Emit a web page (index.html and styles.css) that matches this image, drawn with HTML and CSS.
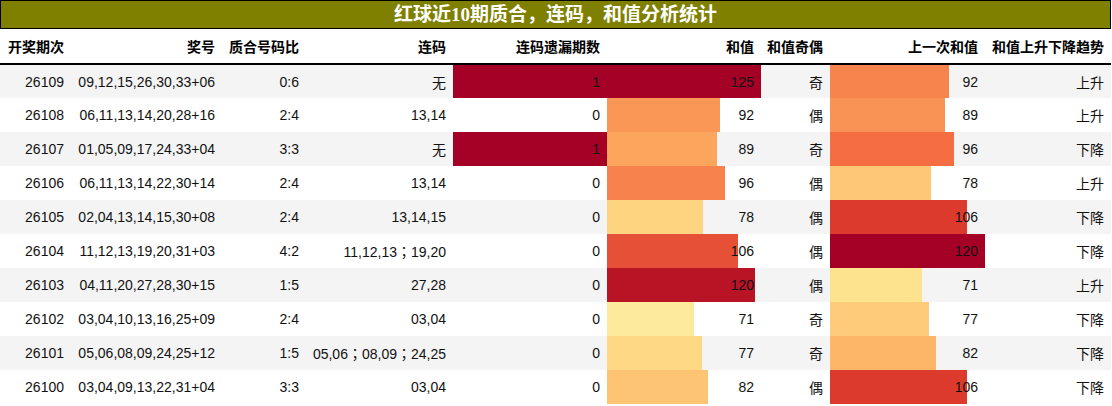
FILE: index.html
```html
<!DOCTYPE html>
<html lang="zh">
<head>
<meta charset="utf-8">
<title>红球近10期质合，连码，和值分析统计</title>
<link rel="stylesheet" href="styles.css">
</head>
<body>
<div class="sheet">
  <div class="title">红球近10期质合，连码，和值分析统计</div>
  <table class="stats">
    <colgroup>
      <col class="c1"><col class="c2"><col class="c3"><col class="c4"><col class="c5"><col class="c6"><col class="c7"><col class="c8"><col class="c9">
    </colgroup>
    <thead>
      <tr>
        <th>开奖期次</th><th>奖号</th><th>质合号码比</th><th>连码</th><th>连码遗漏期数</th><th>和值</th><th>和值奇偶</th><th>上一次和值</th><th>和值上升下降趋势</th>
      </tr>
    </thead>
    <tbody>
      <tr>
        <td>26109</td><td>09,12,15,26,30,33+06</td><td>0:6</td><td class="cjk">无</td>
        <td class="bar" style="--w:100%;--c:#a50026">1</td>
        <td class="bar" style="--w:100%;--c:#a50026">125</td>
        <td class="cjk">奇</td>
        <td class="bar" style="--w:76.67%;--c:#f7834d">92</td>
        <td class="cjk">上升</td>
      </tr>
      <tr>
        <td>26108</td><td>06,11,13,14,20,28+16</td><td>2:4</td><td class="runs">13,14</td>
        <td class="bar">0</td>
        <td class="bar" style="--w:73.6%;--c:#fa9756">92</td>
        <td class="cjk">偶</td>
        <td class="bar" style="--w:74.17%;--c:#f99355">89</td>
        <td class="cjk">上升</td>
      </tr>
      <tr>
        <td>26107</td><td>01,05,09,17,24,33+04</td><td>3:3</td><td class="cjk">无</td>
        <td class="bar" style="--w:100%;--c:#a50026">1</td>
        <td class="bar" style="--w:71.2%;--c:#fca65d">89</td>
        <td class="cjk">奇</td>
        <td class="bar" style="--w:80%;--c:#f46d43">96</td>
        <td class="cjk">下降</td>
      </tr>
      <tr>
        <td>26106</td><td>06,11,13,14,22,30+14</td><td>2:4</td><td class="runs">13,14</td>
        <td class="bar">0</td>
        <td class="bar" style="--w:76.8%;--c:#f7824d">96</td>
        <td class="cjk">偶</td>
        <td class="bar" style="--w:65%;--c:#fec776">78</td>
        <td class="cjk">上升</td>
      </tr>
      <tr>
        <td>26105</td><td>02,04,13,14,15,30+08</td><td>2:4</td><td class="runs">13,14,15</td>
        <td class="bar">0</td>
        <td class="bar" style="--w:62.4%;--c:#fed481">78</td>
        <td class="cjk">偶</td>
        <td class="bar" style="--w:88.33%;--c:#dc3a2c">106</td>
        <td class="cjk">下降</td>
      </tr>
      <tr>
        <td>26104</td><td>11,12,13,19,20,31+03</td><td>4:2</td><td class="runs">11,12,13；19,20</td>
        <td class="bar">0</td>
        <td class="bar" style="--w:84.8%;--c:#e65036">106</td>
        <td class="cjk">偶</td>
        <td class="bar" style="--w:100%;--c:#a50026">120</td>
        <td class="cjk">下降</td>
      </tr>
      <tr>
        <td>26103</td><td>04,11,20,27,28,30+15</td><td>1:5</td><td class="runs">27,28</td>
        <td class="bar">0</td>
        <td class="bar" style="--w:96%;--c:#b91326">120</td>
        <td class="cjk">偶</td>
        <td class="bar" style="--w:59.17%;--c:#fee38f">71</td>
        <td class="cjk">上升</td>
      </tr>
      <tr>
        <td>26102</td><td>03,04,10,13,16,25+09</td><td>2:4</td><td class="runs">03,04</td>
        <td class="bar">0</td>
        <td class="bar" style="--w:56.8%;--c:#feea9c">71</td>
        <td class="cjk">奇</td>
        <td class="bar" style="--w:64.17%;--c:#fecb7a">77</td>
        <td class="cjk">下降</td>
      </tr>
      <tr>
        <td>26101</td><td>05,06,08,09,24,25+12</td><td>1:5</td><td class="runs">05,06；08,09；24,25</td>
        <td class="bar">0</td>
        <td class="bar" style="--w:61.6%;--c:#fed884">77</td>
        <td class="cjk">奇</td>
        <td class="bar" style="--w:68.33%;--c:#fdb668">82</td>
        <td class="cjk">下降</td>
      </tr>
      <tr>
        <td>26100</td><td>03,04,09,13,22,31+04</td><td>3:3</td><td class="runs">03,04</td>
        <td class="bar">0</td>
        <td class="bar" style="--w:65.6%;--c:#fdc474">82</td>
        <td class="cjk">偶</td>
        <td class="bar" style="--w:88.33%;--c:#dc3a2c">106</td>
        <td class="cjk">下降</td>
      </tr>
    </tbody>
  </table>
</div>
</body>
</html>
```

FILE: styles.css
```css
html, body {
  margin: 0;
  padding: 0;
  background: #ffffff;
}

.sheet {
  width: 1111px;
  font-family: "Liberation Sans", "Noto Sans CJK SC", sans-serif;
  color: #111111;
}

.title {
  height: 27px;
  line-height: 27px;
  border: 1px solid #000000;
  background: #808000;
  color: #ffffff;
  text-align: center;
  font-family: "Liberation Serif", "Noto Sans CJK SC", serif;
  font-weight: bold;
  font-size: 19px;
  box-sizing: content-box;
}

.stats {
  width: 1111px;
  border-collapse: collapse;
  table-layout: fixed;
  font-size: 14px;
}

.c1 { width: 71px; }
.c2 { width: 151px; }
.c3 { width: 84px; }
.c4 { width: 147px; }
.c5 { width: 154px; }
.c6 { width: 154px; }
.c7 { width: 69px; }
.c8 { width: 155px; }
.c9 { width: 126px; }

.stats th {
  height: 34px;
  padding: 0 7px 0 0;
  text-align: right;
  font-family: "Noto Sans CJK SC", sans-serif;
  font-weight: bold;
  font-size: 14px;
  color: #000000;
  border-bottom: 2px solid #000000;
  white-space: nowrap;
  vertical-align: middle;
}

.stats td {
  height: 34px;
  padding: 0 7px 0 0;
  text-align: right;
  white-space: nowrap;
  vertical-align: middle;
  box-sizing: border-box;
}

.stats tbody tr:nth-child(odd) {
  background: #f4f4f4;
}

.stats tbody tr:nth-child(even) {
  background: #ffffff;
}

.stats td.cjk {
  font-family: "Noto Sans CJK SC", sans-serif;
}

.stats td.runs {
  font-family: "Liberation Sans", "Noto Sans CJK TC", sans-serif;
}

.stats td.bar {
  --w: 0%;
  --c: transparent;
  background-image: linear-gradient(90deg, var(--c) 0, var(--c) var(--w), transparent var(--w));
  background-repeat: no-repeat;
}
```
